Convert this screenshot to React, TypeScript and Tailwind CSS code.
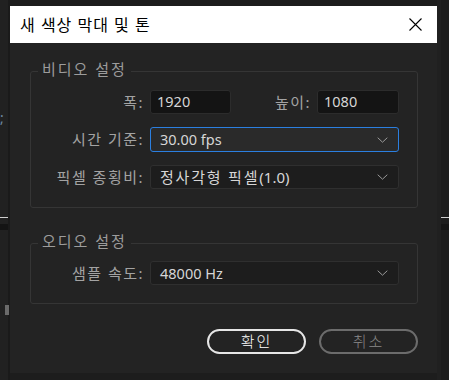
const font = { fontFamily: '"Noto Sans", "Noto Sans CJK KR", sans-serif' };

function Label({ children, className = '' }: { children: React.ReactNode; className?: string }) {
    return (
        <div className={`text-[15px] text-[#a3a3a3] tracking-[1.5px] text-right leading-none ${className}`}>
            {children}
        </div>
    );
}

function Chevron() {
    return (
        <svg width="11" height="6" viewBox="0 0 11 6">
            <path d="M0.7 0.7 L5.5 5.2 L10.3 0.7" fill="none" stroke="#9a9a9a" strokeWidth="1" />
        </svg>
    );
}

function Select({ children, focused = false }: { children: React.ReactNode; focused?: boolean }) {
    return (
        <div
            className={`flex-1 h-full flex items-center justify-between pl-[9px] pr-[10px] rounded-[3px] border ${
                focused ? 'bg-[#2a2a2a] border-[#2b7fe0]' : 'bg-[#1d1d1d] border-[#2f2f2f]'
            }`}
        >
            <span className="text-[14.5px] text-[#d6d6d6] leading-none">{children}</span>
            <Chevron />
        </div>
    );
}

export default function App() {
    return (
        <div className="w-[449px] h-[380px] bg-[#1d1d1d] flex overflow-hidden" style={font}>
            {/* 뒤쪽 앱 (왼쪽) */}
            <div className="w-[10px] h-full bg-[#212121] relative border-r-2 border-[#1a1a1a]">
                <div className="absolute top-[111px] left-0 text-[14px] text-[#6f8aa3] leading-none">;</div>
                <div className="absolute top-[217px] left-0 w-full h-px bg-[#cfcfcf]" />
                <div className="absolute top-[224px] left-0 w-full h-[6px] bg-[#141414]" />
                <div className="absolute top-[305px] left-[5px] w-[4px] h-[10px] bg-[#6a6a6a]" />
            </div>

            {/* 다이얼로그 */}
            <div className="mt-[6px] w-[427px] h-[367px] bg-[#232323] flex flex-col">
                <div className="h-[37px] bg-white flex items-center justify-between pl-[10px] pr-[15px]">
                    <span className="text-[16px] text-black tracking-[1px]">새 색상 막대 및 톤</span>
                    <svg width="13" height="13" viewBox="0 0 13 13">
                        <path d="M0.5 0.5 L12.5 12.5 M12.5 0.5 L0.5 12.5" stroke="#000" strokeWidth="1.1" />
                    </svg>
                </div>

                <div className="flex-1 pl-[20px] pr-[19px] pt-[28px]">
                    {/* 비디오 설정 */}
                    <div className="relative h-[137px] border border-[#353535] rounded-[3px] pt-[18px] pr-[18px] flex flex-col gap-[13px]">
                        <span className="absolute -top-[10px] left-[7px] px-[4px] bg-[#232323] text-[15px] text-[#9c9c9c] tracking-[2px] leading-none">
                            비디오 설정
                        </span>
                        <div className="h-[24px] flex items-center">
                            <Label className="w-[113px]">폭:</Label>
                            <div className="ml-[6px] w-[81px] h-full bg-[#141414] border border-[#2c2c2c] rounded-[3px] flex items-center pl-[6px] text-[14.5px] text-[#d6d6d6]">
                                1920
                            </div>
                            <Label className="flex-1 pr-[6px]">높이:</Label>
                            <div className="w-[82px] h-full bg-[#141414] border border-[#2c2c2c] rounded-[3px] flex items-center pl-[6px] text-[14.5px] text-[#d6d6d6]">
                                1080
                            </div>
                        </div>
                        <div className="h-[25px] flex items-center">
                            <Label className="w-[113px]">시간 기준:</Label>
                            <div className="ml-[6px] flex-1 h-full flex">
                                <Select focused>30.00 fps</Select>
                            </div>
                        </div>
                        <div className="h-[24px] flex items-center">
                            <Label className="w-[113px]">픽셀 종횡비:</Label>
                            <div className="ml-[6px] flex-1 h-full flex">
                                <Select>
                                    <span className="text-[15px] tracking-[1.8px]">정사각형 픽셀</span>
                                    <span className="text-[15px]">(1.0)</span>
                                </Select>
                            </div>
                        </div>
                    </div>

                    {/* 오디오 설정 */}
                    <div className="relative mt-[35px] h-[61px] border border-[#353535] rounded-[3px] pt-[17px] pr-[18px]">
                        <span className="absolute -top-[10px] left-[7px] px-[4px] bg-[#232323] text-[15px] text-[#9c9c9c] tracking-[2px] leading-none">
                            오디오 설정
                        </span>
                        <div className="h-[24px] flex items-center">
                            <Label className="w-[113px]">샘플 속도:</Label>
                            <div className="ml-[6px] flex-1 h-full flex">
                                <Select>48000 Hz</Select>
                            </div>
                        </div>
                    </div>

                    {/* 버튼 */}
                    <div className="mt-[25px] flex justify-end gap-[13px]">
                        <button className="w-[99px] h-[25px] rounded-full border-2 border-[#e6e6e6] text-[15px] font-light text-white tracking-[2px] leading-none">
                            확인
                        </button>
                        <button className="w-[99px] h-[25px] rounded-full border-2 border-[#6c6c6c] text-[15px] font-light text-[#8a8a8a] tracking-[2px] leading-none">
                            취소
                        </button>
                    </div>
                </div>
            </div>

            {/* 뒤쪽 앱 (오른쪽) */}
            <div className="flex-1 h-full bg-[#1c1c1c] relative border-l-4 border-[#202020]">
                <div className="absolute top-[217px] left-0 w-full h-px bg-[#cfcfcf]" />
                <div className="absolute top-[224px] left-0 w-full h-[6px] bg-[#141414]" />
            </div>
        </div>
    );
}
